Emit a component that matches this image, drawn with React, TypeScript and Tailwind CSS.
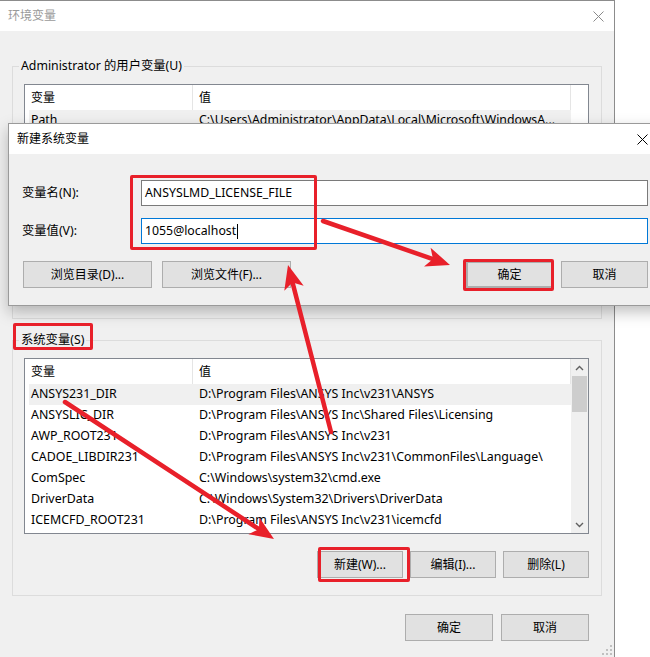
import React from "react";

const font = "font-['Noto_Sans','Noto_Sans_CJK_SC',sans-serif]";

const sysVars: [string, string][] = [
  ["ANSYS231_DIR", "D:\\Program Files\\ANSYS Inc\\v231\\ANSYS"],
  ["ANSYSLIC_DIR", "D:\\Program Files\\ANSYS Inc\\Shared Files\\Licensing"],
  ["AWP_ROOT231", "D:\\Program Files\\ANSYS Inc\\v231"],
  ["CADOE_LIBDIR231", "D:\\Program Files\\ANSYS Inc\\v231\\CommonFiles\\Language\\"],
  ["ComSpec", "C:\\Windows\\system32\\cmd.exe"],
  ["DriverData", "C:\\Windows\\System32\\Drivers\\DriverData"],
  ["ICEMCFD_ROOT231", "D:\\Program Files\\ANSYS Inc\\v231\\icemcfd"],
];

const CloseX = ({ color }: { color: string }) => (
  <svg width="11" height="11" viewBox="0 0 11 11">
    <path d="M0.5 0.5L10.5 10.5M10.5 0.5L0.5 10.5" stroke={color} strokeWidth="1" />
  </svg>
);

const Btn = ({ label, className = "" }: { label: string; className?: string }) => (
  <div
    className={`h-[27px] flex items-center justify-center bg-[#e1e1e1] border border-[#adadad] text-[12px] text-black ${className}`}
  >
    {label}
  </div>
);

const Chevron = ({ up }: { up?: boolean }) => (
  <svg width="9" height="6" viewBox="0 0 9 6">
    <path d={up ? "M1 5L4.5 1.5L8 5" : "M1 1L4.5 4.5L8 1"} stroke="#606060" strokeWidth="1.4" fill="none" />
  </svg>
);

const Header = () => (
  <div className="h-[25px] flex items-center text-[12px] shrink-0">
    <div className="w-[168px] h-full pl-[6px] flex items-center border-r border-[#e5e5e5]">变量</div>
    <div className="w-[378px] h-full pl-[6px] flex items-center border-r border-[#e5e5e5]">值</div>
  </div>
);

// red annotation arrow, drawn from (x1,y1) to the tip (x2,y2)
const Arrow = ({ x1, y1, x2, y2 }: { x1: number; y1: number; x2: number; y2: number }) => {
  const dx = x2 - x1;
  const dy = y2 - y1;
  const len = Math.hypot(dx, dy);
  const ux = dx / len;
  const uy = dy / len;
  const bx = x2 - ux * 24;
  const by = y2 - uy * 24;
  const nx = -uy * 10;
  const ny = ux * 10;
  return (
    <g>
      <line x1={x1} y1={y1} x2={bx + ux * 6} y2={by + uy * 6} stroke="#e8202a" strokeWidth="4.5" strokeLinecap="round" />
      <polygon
        points={`${x2},${y2} ${bx + nx},${by + ny} ${bx + ux * 6},${by + uy * 6} ${bx - nx},${by - ny}`}
        fill="#e8202a"
      />
    </g>
  );
};

export default function App() {
  return (
    <div className={`relative w-[650px] h-[657px] bg-white overflow-hidden ${font}`}>
      {/* 环境变量 main window */}
      <div className="w-[615px] h-[657px] flex flex-col bg-[#f0f0f0] border-r border-t border-[#8c8c8c]">
        <div className="h-[30px] bg-white flex items-center justify-between pl-[8px] pr-[10px] shrink-0">
          <span className="text-[12px] text-[#9a9a9a]">环境变量</span>
          <CloseX color="#8a8a8a" />
        </div>

        <div className="flex flex-col px-[12px]">
          {/* user variables */}
          <fieldset className="mt-[27px] h-[261px] border border-[#dcdcdc] flex flex-col">
            <legend className="ml-[6px] px-[2px] text-[12.3px] leading-[16px]">Administrator 的用户变量(U)</legend>
            <div className="mt-[10px] ml-[11px] mr-[12px] h-[176px] border border-[#828790] bg-white flex flex-col">
              <Header />
              <div className="ml-[4px] w-[542px] h-[21px] bg-[#f0f0f0] flex items-center text-[12.3px] whitespace-nowrap overflow-hidden">
                <div className="w-[168px] pl-[2px] shrink-0">Path</div>
                <div className="pl-[2px]">C:\Users\Administrator\AppData\Local\Microsoft\WindowsA...</div>
              </div>
            </div>
          </fieldset>

          {/* system variables */}
          <fieldset className="mt-[13px] h-[264px] border border-[#dcdcdc] flex flex-col">
            <legend className="ml-[6px] px-[2px] text-[12.3px] leading-[16px]">系统变量(S)</legend>
            <div className="mt-[10px] ml-[11px] mr-[12px] h-[176px] border border-[#828790] bg-white flex">
              <div className="flex-1 flex flex-col">
                <Header />
                {sysVars.map(([name, value], i) => (
                  <div
                    key={name}
                    className={`ml-[4px] w-[542px] h-[21px] flex items-center text-[12.4px] whitespace-nowrap ${
                      i === 0 ? "bg-[#f0f0f0]" : ""
                    }`}
                  >
                    <div className="w-[168px] pl-[2px] shrink-0">{name}</div>
                    <div className="pl-[2px]">{value}</div>
                  </div>
                ))}
              </div>
              <div className="w-[17px] bg-[#f0f0f0] flex flex-col">
                <div className="h-[17px] flex items-center justify-center">
                  <Chevron up />
                </div>
                <div className="mx-[1px] h-[36px] bg-[#cdcdcd]" />
                <div className="flex-1" />
                <div className="h-[17px] flex items-center justify-center">
                  <Chevron />
                </div>
              </div>
            </div>
            <div className="mt-[17px] mr-[12px] flex justify-end gap-[7px]">
              <Btn label="新建(W)..." className="w-[86px]" />
              <Btn label="编辑(I)..." className="w-[86px]" />
              <Btn label="删除(L)" className="w-[86px]" />
            </div>
          </fieldset>

          <div className="mt-[18px] mr-[13px] flex justify-end gap-[8px]">
            <Btn label="确定" className="w-[88px]" />
            <Btn label="取消" className="w-[88px]" />
          </div>
        </div>

        <div className="mt-auto self-end mr-[2px] mb-[2px]">
          <svg width="10" height="10" viewBox="0 0 10 10">
            <rect x="8" y="0" width="2" height="2" fill="#c0c0c0" />
            <rect x="4" y="4" width="2" height="2" fill="#c0c0c0" />
            <rect x="8" y="4" width="2" height="2" fill="#c0c0c0" />
            <rect x="0" y="8" width="2" height="2" fill="#c0c0c0" />
            <rect x="4" y="8" width="2" height="2" fill="#c0c0c0" />
            <rect x="8" y="8" width="2" height="2" fill="#c0c0c0" />
          </svg>
        </div>
      </div>

      {/* 新建系统变量 dialog on top */}
      <div className="absolute left-[8px] top-[123px] w-[660px] h-[183px] bg-[#f0f0f0] border border-[#9a9a9a] shadow-[0_6px_14px_rgba(0,0,0,0.25)] flex flex-col">
        <div className="h-[30px] bg-white flex items-center justify-between pl-[8px] pr-[19px] shrink-0">
          <span className="text-[12px] text-black">新建系统变量</span>
          <CloseX color="#000" />
        </div>
        <div className="flex flex-col pt-[26px] pl-[13px] pr-[19px]">
          <div className="flex items-center h-[26px]">
            <span className="w-[119px] text-[12.3px]">变量名(N):</span>
            <div className="flex-1 h-[26px] bg-white border border-[#7a7a7a] flex items-center pl-[3px] text-[12.3px] whitespace-nowrap">
              ANSYSLMD_LICENSE_FILE
            </div>
          </div>
          <div className="flex items-center h-[26px] mt-[12px]">
            <span className="w-[119px] text-[12.3px]">变量值(V):</span>
            <div className="flex-1 h-[26px] bg-white border border-[#0078d7] flex items-center pl-[3px] text-[12.3px] whitespace-nowrap">
              1055@localhost
              <span className="ml-[1px] w-[1px] h-[15px] bg-black" />
            </div>
          </div>
          <div className="mt-[17px] flex items-center">
            <Btn label="浏览目录(D)..." className="w-[129px] ml-[1px]" />
            <Btn label="浏览文件(F)..." className="w-[129px] ml-[10px]" />
            <div className="flex-1" />
            <Btn label="确定" className="w-[87px] border-[#0078d7] border-2" />
            <Btn label="取消" className="w-[87px] ml-[8px]" />
          </div>
        </div>
      </div>

      {/* red annotations */}
      <div className="absolute left-[130px] top-[175px] w-[187px] h-[75px] border-[3px] border-[#e8202a] rounded-[2px]" />
      <div className="absolute left-[463px] top-[259px] w-[91px] h-[32px] border-[3px] border-[#e8202a] rounded-[2px]" />
      <div className="absolute left-[13px] top-[323px] w-[80px] h-[27px] border-[3px] border-[#e8202a] rounded-[2px]" />
      <div className="absolute left-[318px] top-[547px] w-[92px] h-[35px] border-[3px] border-[#e8202a] rounded-[2px]" />
      <svg className="absolute left-0 top-0 pointer-events-none" width="650" height="657">
        <Arrow x1={323} y1={221} x2={450} y2={265} />
        <Arrow x1={331} y1={432} x2={288} y2={265} />
        <Arrow x1={65} y1={402} x2={274} y2={539} />
      </svg>
    </div>
  );
}
